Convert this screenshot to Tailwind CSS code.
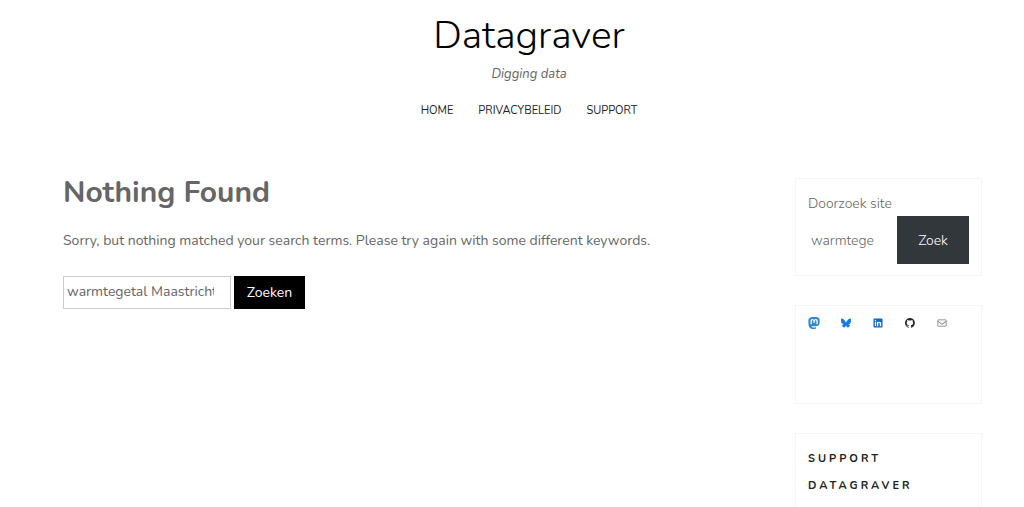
<!DOCTYPE html>
<html lang="nl">
<head>
  <meta charset="UTF-8">
  <meta name="viewport" content="width=device-width, initial-scale=1.0">
  <title>Datagraver</title>
  <script src="https://cdn.jsdelivr.net/npm/@tailwindcss/browser@4"></script>
</head>
<body class="bg-white font-[Nunito,Lato,sans-serif] text-[#666] overflow-x-hidden">
  <header class="flex flex-col items-center pl-[34px] pt-[9px]">
    <h1 class="text-[39px] leading-[54px] font-light text-black"><a href="#">Datagraver</a></h1>
    <p class="text-[13px] leading-[22px] italic">Digging data</p>
    <nav class="mt-4 flex gap-[25px] text-[11px] leading-5 text-[#222] uppercase">
      <a href="#">Home</a>
      <a href="#">Privacybeleid</a>
      <a href="#">Support</a>
    </nav>
  </header>

  <div class="flex items-start mt-[57px] pl-[63px] pr-[42px] gap-[60px]">
    <main class="flex-1 min-w-0">
      <h2 class="text-[30px] leading-[30px] font-bold">Nothing Found</h2>
      <p class="mt-[21px] text-[14px] leading-6">Sorry, but nothing matched your search terms. Please try again with some different keywords.</p>
      <form class="mt-[23px] flex gap-[3px]" onsubmit="return false">
        <input type="search" aria-label="Zoeken naar" value="warmtegetal Maastricht" class="w-[168px] h-[33px] border border-[#ccc] pl-[3px] pr-4 pb-[2px] text-[14px] text-[#666] [&::-webkit-search-cancel-button]:hidden">
        <button class="w-[71px] h-[33px] bg-black text-white text-[14px]">Zoeken</button>
      </form>
    </main>

    <aside class="w-[187px] shrink-0 flex flex-col gap-[29px]">
      <section class="border border-[#f5f5f5] px-3 pt-3 pb-[11px]">
        <form onsubmit="return false">
          <label for="site-search" class="block text-[14px] leading-[25px] font-light">Doorzoek site</label>
          <div class="flex justify-between">
            <input id="site-search" type="search" value="warmtegetal" class="w-[66px] pl-[3px] text-[14px] font-light [&::-webkit-search-cancel-button]:hidden">
            <button class="w-[72px] h-12 bg-[#32373c] text-white text-[14px] font-light">Zoek</button>
          </div>
        </form>
      </section>

      <section class="h-[99px] border border-[#f5f5f5] px-3 pt-[11px]">
        <ul class="flex gap-5">
          <li><a href="#" aria-label="Mastodon" class="block text-[#3088d4]">
            <svg class="size-3" viewBox="0 0 24 24" fill="currentColor"><path d="M23.2 5.3C22.900 2.700 20.600.7 17.900.3 17.500.2 15.800 0 11.900 0S7.200.2 6.700.3C4 .7 1.600 2.600 1 5.200c-.3 1.300-.3 2.700-.2 4 .1 1.900.1 3.800.3 5.700.1 1.200.3 2.500.6 3.700.5 2.200 2.700 4.100 4.800 4.800 2.300.8 4.700.9 7.100.4l.8-.2c.6-.2 1.200-.4 1.700-.7v-2.300c-1.600.4-3.200.6-4.700.6-2.700 0-3.500-1.300-3.700-1.800-.2-.5-.3-1-.3-1.500 1.500.4 3.100.5 4.700.5h1.100c1.600 0 3.300-.1 4.900-.4 2.400-.5 4.700-1.900 5-5.600v-3.100c0-.9.3-2.800.1-4zm-3.800 9h-2.500V8.300c0-1.300-.5-1.900-1.600-1.900-1.200 0-1.800.8-1.800 2.300v3.300H11V8.700c0-1.500-.6-2.300-1.800-2.300-1.100 0-1.600.6-1.600 1.900v6H5V8.200c0-2.500 1.200-4.200 3.600-4.200 1.600 0 2.900.6 3.600 2 .8-1.400 2-2 3.700-2 2.400 0 3.500 1.700 3.500 4.200z"/></svg>
          </a></li>
          <li><a href="#" aria-label="Bluesky" class="block text-[#1478e6]">
            <svg class="size-3" viewBox="0 0 24 24" fill="currentColor"><path d="M6.300 4.200C8.600 5.900 11 9.400 12 11.300c1-1.900 3.400-5.400 5.700-7.100C19.400 3 22 2 22 5.100c0 .6-.4 5.200-.6 6-.7 2.600-3.300 3.200-5.600 2.800 4 .7 5.100 3 2.900 5.300-4.200 4.300-6-1.100-6.500-2.400-.1-.3-.1-.4-.2-.3 0-.1-.1 0-.2.3-.5 1.300-2.300 6.700-6.500 2.400-2.200-2.300-1.200-4.600 2.900-5.300-2.300.4-4.900-.3-5.600-2.800-.2-.8-.6-5.400-.6-6C2 2 4.700 3 6.300 4.200z"/></svg>
          </a></li>
          <li><a href="#" aria-label="LinkedIn" class="block text-[#0d66c2]">
            <svg class="size-3" viewBox="0 0 24 24" fill="currentColor"><path d="M19.700 3H4.300C3.600 3 3 3.600 3 4.300v15.400c0 .7.6 1.300 1.300 1.300h15.400c.7 0 1.300-.6 1.300-1.300V4.300c0-.7-.6-1.300-1.300-1.300zM8.300 18.300H5.700V9.700h2.700v8.600zM7 8.600c-.9 0-1.500-.7-1.500-1.600C5.500 6.200 6.100 5.500 7 5.500s1.600.7 1.600 1.500c0 .9-.7 1.600-1.600 1.600zm11.300 9.700h-2.700v-4.200c0-1 0-2.300-1.400-2.300s-1.600 1.100-1.600 2.200v4.300H10V9.700h2.600v1.200c.4-.7 1.200-1.400 2.500-1.400 2.700 0 3.200 1.800 3.200 4.100z"/></svg>
          </a></li>
          <li><a href="#" aria-label="GitHub" class="block text-[#24292d]">
            <svg class="size-3" viewBox="0 0 24 24" fill="currentColor"><path d="M12 2C6.500 2 2 6.500 2 12c0 4.400 2.900 8.200 6.800 9.500.5.100.7-.2.7-.5v-1.700c-2.800.6-3.400-1.300-3.400-1.300-.5-1.200-1.100-1.500-1.100-1.500-.9-.6.100-.6.100-.6 1 .1 1.500 1 1.500 1 .9 1.500 2.300 1.100 2.900.8.100-.7.300-1.100.6-1.300-2.200-.3-4.600-1.100-4.600-4.900 0-1.100.4-2 1-2.700-.1-.3-.4-1.300.1-2.700 0 0 .8-.3 2.700 1a9.400 9.400 0 0 1 5 0c1.900-1.300 2.700-1 2.700-1 .5 1.400.2 2.400.1 2.700.6.7 1 1.600 1 2.700 0 3.800-2.300 4.700-4.600 4.900.4.300.7.900.7 1.900V21c0 .3.200.6.700.5 4-1.300 6.800-5.100 6.800-9.500C22 6.500 17.500 2 12 2z"/></svg>
          </a></li>
          <li><a href="#" aria-label="E-mail" class="block text-[#777]">
            <svg class="size-3" viewBox="0 0 24 24" fill="currentColor"><path d="M19 5H5c-1.100 0-2 .9-2 2v10c0 1.100.9 2 2 2h14c1.100 0 2-.9 2-2V7c0-1.100-.9-2-2-2zm.5 12c0 .3-.2.500-.5.500H5c-.3 0-.5-.2-.5-.5V9.800l7.500 5.600 7.500-5.600V17zm0-9.100L12 13.600 4.500 7.900V7c0-.3.200-.5.500-.5h14c.3 0 .5.200.5.500v.9z"/></svg>
          </a></li>
        </ul>
      </section>

      <section class="border border-[#f5f5f5] px-3 pt-[11px] pb-6">
        <h2 class="text-[11px] leading-[27px] font-bold tracking-[3px] text-[#222] uppercase">Support Datagraver</h2>
      </section>
    </aside>
  </div>
</body>
</html>
